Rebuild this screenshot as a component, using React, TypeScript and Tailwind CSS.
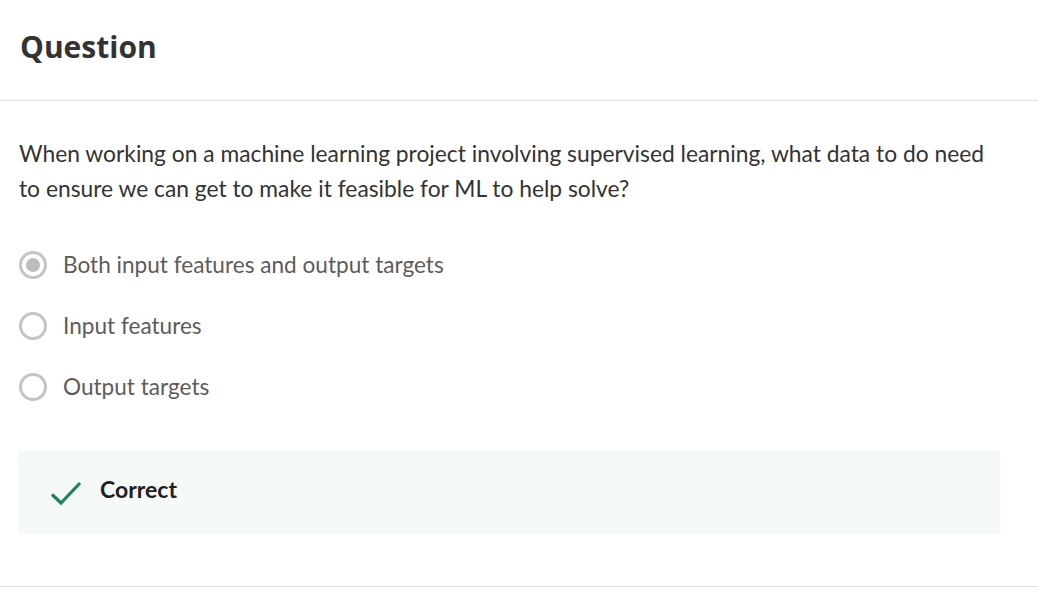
import React from "react";

const body = { fontFamily: "Lato, 'Noto Sans', sans-serif" };

function Radio({ checked }: { checked?: boolean }) {
  return (
    <span className="flex h-[28px] w-[28px] shrink-0 items-center justify-center rounded-full border-[3px] border-[#c4c4c4] bg-white">
      {checked && <span className="h-[14px] w-[14px] rounded-full bg-[#bdbdbd]" />}
    </span>
  );
}

export default function App() {
  const options = [
    { label: "Both input features and output targets", checked: true },
    { label: "Input features" },
    { label: "Output targets" },
  ];
  return (
    <div className="min-h-[599px] w-[1038px] bg-white" style={body}>
      <div className="border-b border-[#e1e1e1] px-[20px] pt-[25px] pb-[31px]">
        <h1 className="text-[30px] font-bold leading-[44px] text-[#333333]" style={{ fontFamily: "'Open Sans', sans-serif" }}>
          Question
        </h1>
      </div>
      <div className="border-b border-[#e1e1e1] pr-[38px] pl-[19px] pt-[35px] pb-[52px]">
        <p className="max-w-[975px] text-[22.8px] leading-[35px] text-[#333333]">
          When working on a machine learning project involving supervised learning, what data to do need to ensure we can get to make it feasible for ML to help solve?
        </p>
        <div className="mt-[45px] flex flex-col gap-[33px]">
          {options.map((o) => (
            <div key={o.label} className="flex items-center gap-[16px]">
              <Radio checked={o.checked} />
              <span className="text-[22.6px] leading-[28px] text-[#5c5c5c]">{o.label}</span>
            </div>
          ))}
        </div>
        <div className="mt-[50px] flex h-[83px] items-center gap-[18px] bg-[#f5f9f8] pl-[32px] -ml-[1px]">
          <svg width="32" height="26" viewBox="0 0 32 26" fill="none">
            <path d="M2 14.5 L11 23 L30 3" stroke="#1f8354" strokeWidth="3.2" />
          </svg>
          <span className="mb-[6px] text-[23px] font-bold text-[#1f1f1f]">Correct</span>
        </div>
      </div>
    </div>
  );
}
